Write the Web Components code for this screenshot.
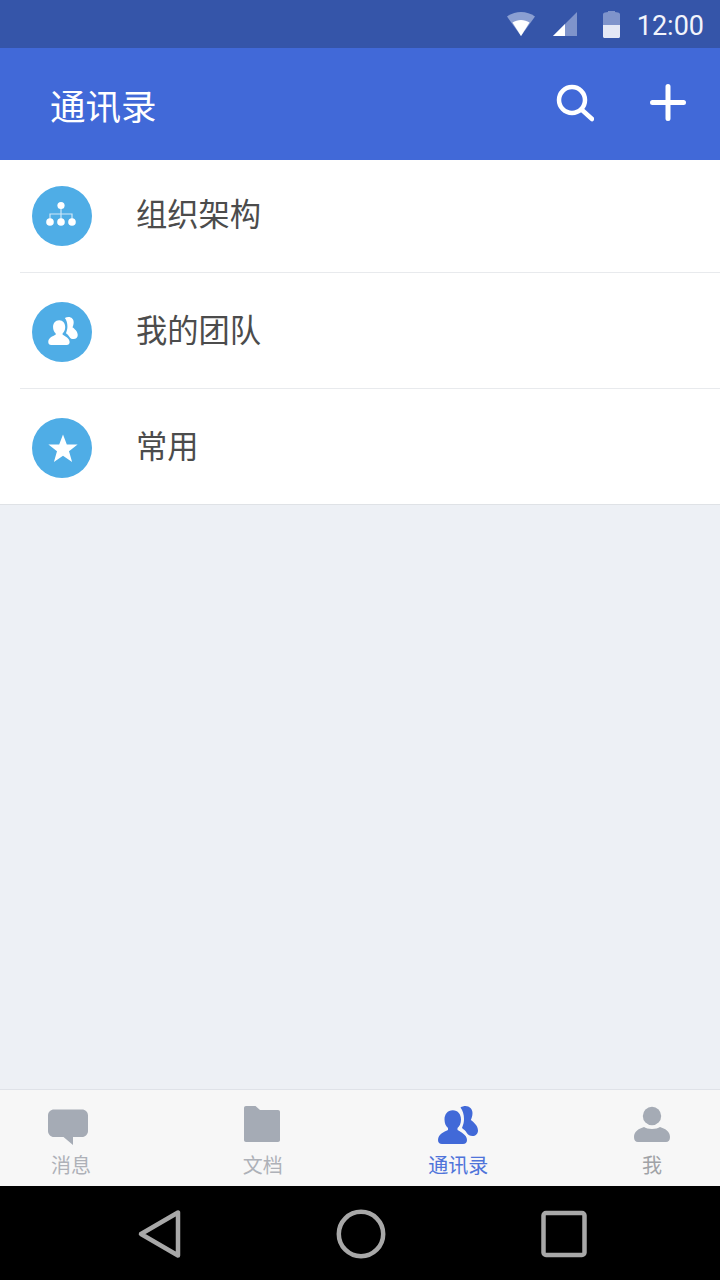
<!DOCTYPE html>
<html lang="zh-CN">
<head>
<meta charset="utf-8">
<style>
  html, body { margin: 0; height: 100%; }
  body { font-family: "Noto Sans CJK SC", sans-serif; background: #edf0f5; }
  #app { width: 720px; height: 1280px; display: flex; flex-direction: column; overflow: hidden; }
  svg { display: block; }
</style>
</head>
<body>
<div id="app">
  <status-bar time="12:00"></status-bar>
  <app-header title="通讯录">
    <svg slot="actions" width="40" height="40" viewBox="0 0 40 40" style="margin-right:54px"><circle cx="18" cy="16" r="13" fill="none" stroke="#fff" stroke-width="4.5"/><path d="M27.5 25.5L38 35" stroke="#fff" stroke-width="4.5" stroke-linecap="round"/></svg>
    <svg slot="actions" width="40" height="40" viewBox="0 0 40 40"><path d="M20 2.5V34.5M4.5 18.5H35.5" stroke="#fff" stroke-width="5" stroke-linecap="round"/></svg>
  </app-header>
  <contact-list>
    <contact-row label="组织架构">
      <svg slot="icon" width="36" height="36" viewBox="0 0 36 36" style="margin-right:2px"><path d="M18 8V16M7 24V16H29V24M18 16V24" fill="none" stroke="#cfe8f8" stroke-width="1.2"/><circle cx="18" cy="7.5" r="3.6" fill="#fff"/><circle cx="7" cy="24" r="3.8" fill="#fff"/><circle cx="18" cy="24" r="3.8" fill="#fff"/><circle cx="29" cy="24" r="3.8" fill="#fff"/></svg>
    </contact-row>
    <contact-row label="我的团队">
      <svg slot="icon" width="30" height="28" viewBox="0 0 40 38" style="margin:0 0 3px 1px"><path fill="#fff" d="M14.8 4.3C9.5 4.3 6.5 8.5 6.5 13.5C6.5 17.5 8 20.5 10 22V24C6 26 0 28 0 34C0 36.5 1.5 38 4 38H25C27.5 38 29 36.5 29 34C29 29 23 26 19.5 24V22C21.5 20.5 23 17.5 23 13.5C23 8.5 20 4.3 14.8 4.3Z"/><path fill="#fff" d="M22.5 1.5C24 .5 25.8 0 27.5 0C31.5 0 34.5 3 34.5 7C34.5 10 33.5 12.5 32.8 14C35.5 16 40 19.5 40 24.5C40 28 37.5 30 34.5 30C32 30 30 29 28.8 27C27.8 25 26 23.5 24 22C25.5 18 26 16 26 13C26 8.5 24.8 4.5 22.5 1.5Z"/></svg>
    </contact-row>
    <contact-row label="常用">
      <svg slot="icon" width="32" height="32" viewBox="0 0 32 32" style="margin:2px 0 0 1px"><path fill="#fff" d="M16 1.5L19.8 11.6H30.6L22 18.2L25.1 29L16 22.8L6.9 29L10 18.2L1.4 11.6H12.2Z"/></svg>
    </contact-row>
  </contact-list>
  <tab-bar>
    <tab-item label="消息" style="margin:0 -3px 0 3px">
      <svg slot="icon" width="40" height="40" viewBox="0 0 40 40" style="margin:0 6px -2px 0"><path fill="#a5abb5" d="M6 3.5H34C37.3 3.5 40 6 40 9.5V25C40 28.3 37.3 31 34 31H25V39L15.5 31H6C2.7 31 0 28.3 0 25V9.5C0 6 2.7 3.5 6 3.5Z"/></svg>
    </tab-item>
    <tab-item label="文档">
      <svg slot="icon" width="36" height="38" viewBox="0 0 36 38" style="margin-right:1px"><path fill="#a5abb5" d="M2 0H11.5L16 4H34C35.2 4 36 4.8 36 6V34C36 35.2 35.2 36 34 36H2C.8 36 0 35.2 0 34V2C0 .8 .8 0 2 0Z"/></svg>
    </tab-item>
    <tab-item label="通讯录" active style="margin:0 -1px 0 1px">
      <svg slot="icon" width="40" height="38" viewBox="0 0 40 38"><path fill="#4169d8" d="M14.8 4.3C9.5 4.3 6.5 8.5 6.5 13.5C6.5 17.5 8 20.5 10 22V24C6 26 0 28 0 34C0 36.5 1.5 38 4 38H25C27.5 38 29 36.5 29 34C29 29 23 26 19.5 24V22C21.5 20.5 23 17.5 23 13.5C23 8.5 20 4.3 14.8 4.3Z"/><path fill="#4169d8" d="M22.5 1.5C24 .5 25.8 0 27.5 0C31.5 0 34.5 3 34.5 7C34.5 10 33.5 12.5 32.8 14C35.5 16 40 19.5 40 24.5C40 28 37.5 30 34.5 30C32 30 30 29 28.8 27C27.8 25 26 23.5 24 22C25.5 18 26 16 26 13C26 8.5 24.8 4.5 22.5 1.5Z"/></svg>
    </tab-item>
    <tab-item label="我" style="--tab-color:#a0a2a6">
      <svg slot="icon" width="36" height="38" viewBox="0 0 36 38"><circle cx="18" cy="10" r="9.2" fill="#a5abb5"/><path fill="#a5abb5" d="M10 21C13 23.5 23 23.5 26 21C31 22.5 36 25.5 36 31C36 34.5 34.5 36 32 36H4C1.5 36 0 34.5 0 31C0 25.5 5 22.5 10 21Z"/></svg>
    </tab-item>
  </tab-bar>
  <nav-bar></nav-bar>
</div>

<script>
class StatusBar extends HTMLElement {
  constructor() {
    super();
    this.attachShadow({ mode: "open" });
  }
  connectedCallback() {
    this.shadowRoot.innerHTML = `
    <style>
      :host { display: flex; align-items: center; height: 48px; flex: none; background: #3555a9; padding-right: 16px; justify-content: flex-end; box-sizing: border-box; }
      svg { display: block; }
      .wifi { margin-right: 18px; }
      .signal { margin-right: 26px; }
      .battery { margin-right: 17px; }
      span { font: 27px/44px Roboto, sans-serif; padding-top: 4px; color: #f2f4fb; }
    </style>
    <svg class="wifi" width="28" height="24" viewBox="0 0 28 24"><path fill="#8b9fd2" d="M0 4.5C8-1.5 20-1.5 28 4.5L14 24Z"/><path fill="#fff" d="M5.5 10.5C10.5 7 17.5 7 22.5 10.5L14 24Z"/></svg>
    <svg class="signal" width="24" height="24" viewBox="0 0 24 24"><path fill="#7f94cb" d="M24 0V24H0Z"/><path fill="#fff" d="M12 12V24H0Z"/></svg>
    <svg class="battery" width="17" height="27" viewBox="0 0 17 27"><path fill="#7f94cb" d="M2 1.5L5 1V0H12V1L15 1.5C16.2 1.7 17 2.5 17 3.5V14H0V3.5C0 2.5 .8 1.7 2 1.5Z"/><path fill="#e4e8f5" d="M0 14H17V25.5C17 26.3 16.3 27 15.5 27H1.5C.7 27 0 26.3 0 25.5Z"/></svg>
    <span>${this.getAttribute("time")}</span>`;
  }
}

class AppHeader extends HTMLElement {
  constructor() {
    super();
    this.attachShadow({ mode: "open" });
  }
  connectedCallback() {
    this.shadowRoot.innerHTML = `
    <style>
      :host { display: flex; align-items: center; height: 112px; flex: none; background: #4169d8; padding: 0 32px 0 50px; box-sizing: border-box; }
      h1 { margin: 0; flex: 1; font-weight: 400; font-size: 35.5px; color: #fff; }
      .actions { display: flex; align-items: center; }
    </style>
    <h1>${this.getAttribute("title")}</h1>
    <div class="actions"><slot name="actions"></slot></div>`;
  }
}

class ContactList extends HTMLElement {
  constructor() {
    super();
    this.attachShadow({ mode: "open" });
    this.shadowRoot.innerHTML = `
    <style>
      :host { display: block; flex: none; background: #fff; border-bottom: 1px solid #dfe2e6; }
    </style>
    <slot></slot>`;
  }
}

class ContactRow extends HTMLElement {
  constructor() {
    super();
    this.attachShadow({ mode: "open" });
  }
  connectedCallback() {
    this.shadowRoot.innerHTML = `
    <style>
      :host { display: block; padding-left: 20px; }
      .row { display: flex; align-items: center; padding: 29px 0 26px 12px; border-bottom: 1px solid #e8eaed; }
      :host(:first-child) .row { padding-top: 26px; }
      :host(:last-child) .row { border-bottom: 0; }
      .circle { width: 60px; height: 60px; border-radius: 50%; background: #4fade6; display: flex; align-items: center; justify-content: center; flex: none; }
      .label { margin-left: 44px; font-size: 31.25px; line-height: 54px; padding-bottom: 6px; color: #4c4c4c; }
    </style>
    <div class="row">
      <div class="circle"><slot name="icon"></slot></div>
      <div class="label">${this.getAttribute("label")}</div>
    </div>`;
  }
}

class TabBar extends HTMLElement {
  constructor() {
    super();
    this.attachShadow({ mode: "open" });
    this.shadowRoot.innerHTML = `
    <style>
      :host { display: flex; justify-content: space-between; margin-top: auto; height: 97px; flex: none; box-sizing: border-box; padding: 16px 28px 0; background: #f7f7f7; border-top: 1px solid #dfe2e8; }
    </style>
    <slot></slot>`;
  }
}

class TabItem extends HTMLElement {
  constructor() {
    super();
    this.attachShadow({ mode: "open" });
  }
  connectedCallback() {
    const color = this.hasAttribute("active") ? "#4f74da" : "var(--tab-color, #aeb1b8)";
    this.shadowRoot.innerHTML = `
    <style>
      :host { display: flex; flex-direction: column; align-items: center; width: 80px; }
      span { font-size: 20px; line-height: 24px; margin-top: 9px; color: ${color}; }
    </style>
    <slot name="icon"></slot>
    <span>${this.getAttribute("label")}</span>`;
  }
}

class NavBar extends HTMLElement {
  constructor() {
    super();
    this.attachShadow({ mode: "open" });
    this.shadowRoot.innerHTML = `
    <style>
      :host { display: flex; align-items: center; height: 94px; flex: none; background: #000; padding: 2px 0 0 136px; box-sizing: border-box; }
      svg { display: block; }
    </style>
    <svg width="48" height="52" viewBox="0 0 48 52" style="margin-right:151px"><path d="M5 26L42 4.5V47.5Z" fill="none" stroke="#a8a8a8" stroke-width="4.5" stroke-linejoin="round"/></svg>
    <svg width="52" height="52" viewBox="0 0 52 52" style="margin-right:153px"><circle cx="26" cy="26" r="22.2" fill="none" stroke="#a8a8a8" stroke-width="4.5"/></svg>
    <svg width="48" height="48" viewBox="0 0 48 48"><rect x="3.5" y="3" width="41" height="42" rx="2.5" fill="none" stroke="#a8a8a8" stroke-width="4.5"/></svg>`;
  }
}

customElements.define("status-bar", StatusBar);
customElements.define("app-header", AppHeader);
customElements.define("contact-list", ContactList);
customElements.define("contact-row", ContactRow);
customElements.define("tab-bar", TabBar);
customElements.define("tab-item", TabItem);
customElements.define("nav-bar", NavBar);
</script>
</body>
</html>
